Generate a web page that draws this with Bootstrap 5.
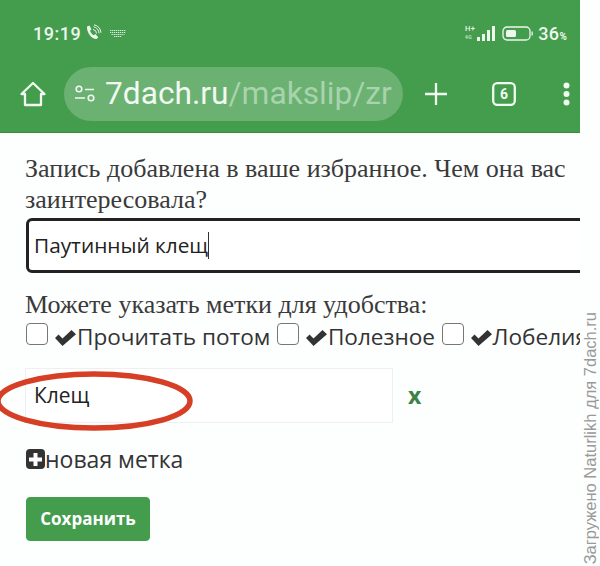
<!DOCTYPE html>
<html lang="ru">
<head>
  <meta charset="UTF-8">
  <meta name="viewport" content="width=device-width, initial-scale=1.0">
  <title>Метки</title>
  <link href="https://cdn.jsdelivr.net/npm/bootstrap@5.3.0/dist/css/bootstrap.min.css" rel="stylesheet">
  <style>
    html, body { height: 566px; overflow: hidden; }
    body { background: #fdfefe; font-family: "Open Sans", "Noto Sans", sans-serif; color: #333; }
    .shot { width: 600px; height: 566px; position: relative; overflow: hidden; }
    .phone { width: 580px; height: 566px; overflow: hidden; position: relative; }
    .top-bar { height: 133px; background: #439d4c; color: #eef6ee; border-bottom: 1px solid #3a8a44; }
    .status-row { height: 61px; padding: 5px 13px 0 33px; font-family: Roboto, sans-serif; font-weight: 500; font-size: 18px; letter-spacing: .5px; }
    .status-pct { font-size: 10px; font-weight: 700; letter-spacing: 0; }
    .url-row { height: 66px; padding-left: 20px; }
    .url-pill { width: 339px; height: 54px; margin-left: 18px; padding-left: 10px; border-radius: 27px; background: #6ab172; font-family: Roboto, sans-serif; font-size: 31.7px; white-space: nowrap; overflow: hidden; }
    .url-host { margin-left: 9px; color: #f2f9f2; }
    .url-path { color: #a9d3ad; }
    .tool-plus { margin-left: 22px; }
    .tool-tabs { margin-left: 45px; }
    .tool-menu { margin-left: 47px; }
    .form-area { padding: 20px 0 0 26px; }
    .serif-line { font-family: "Liberation Serif", serif; font-size: 26px; line-height: 31px; color: #3a3a3a; margin: 0 0 0 -1px; width: 548px; }
    .note-input { width: 600px; height: 55px; margin-top: 3px; padding: 0 5px; border: 3px solid #222; border-radius: 6px; font-size: 20.8px; color: #222; background: #fff; display: flex; align-items: center; }
    .caret-bar { width: 1px; height: 27px; background: #333; }
    .label-head { margin-top: 16px; }
    .tag-row { height: 33px; white-space: nowrap; font-size: 22.6px; line-height: 30px; color: #333; }
    .tag-box { width: 22px; height: 22px; border: 1.5px solid #777; border-radius: 4px; background: #fff; flex: none; margin-top: -6px; }
    .tag-check { margin-left: 7px; margin-right: 1px; margin-top: 2px; flex: none; }
    .tag-item { margin-right: 6.5px; }
    .tag-field-row { margin-top: 15px; }
    .tag-field { width: 368px; height: 55px; margin-left: -1px; padding-left: 8px; border: 1px solid #efefef; background: #fff; font-size: 21px; color: #222; display: flex; align-items: center; }
    .tag-remove { margin-left: 15px; color: #3d8346; font-weight: 700; font-size: 23px; }
    .new-tag { margin-top: 21px; font-size: 23px; line-height: 30px; color: #333; }
    .plus-box { width: 19px; height: 20px; border-radius: 4px; background: #333; flex: none; }
    .btn-keep { margin-top: 23px; width: 124px; height: 44px; padding: 0; background: #439d4c; border-color: #439d4c; color: #fff; font-weight: 700; font-size: 17px; border-radius: 4px; }
    .red-ring { position: absolute; left: -6px; top: 368px; }
    .wm-text { position: absolute; left: 581px; bottom: 2px; writing-mode: vertical-rl; transform: rotate(180deg); font-family: "Liberation Sans", sans-serif; font-size: 16.5px; line-height: 18px; color: #9a9a9a; white-space: nowrap; }
  </style>
</head>
<body>
  <div class="shot">
    <div class="phone">
      <div class="top-bar">
        <div class="status-row d-flex align-items-center">
          <span>19:19</span>
          <!-- phone with wifi-call arcs -->
          <svg class="ms-1" width="17" height="18" viewBox="0 0 17 18" fill="none">
            <path d="M2 2.500l2.500-1 2 4-1.500 1.200c.6 1.800 2 3.500 3.800 4.600l1.500-1.300 3 3.200-1.800 1.800C6.500 15 1.500 8.500 2 2.500z" fill="#eef6ee"/>
            <path d="M8 5.500a4 4 0 0 1 3.500 4M8.500 2.800a6.500 6.500 0 0 1 5.500 6.500M9 .8a8.500 8.500 0 0 1 7 8" stroke="#eef6ee" stroke-width="1"/>
          </svg>
          <!-- keyboard -->
          <svg class="ms-2" width="16" height="9" viewBox="0 0 16 9" fill="none" stroke="#dcecdd" stroke-width="1.200">
            <path d="M0 1.500h16M0 3.500h16M1.500 5.500h13M4 7.500h8" stroke-dasharray="1.300 .7"/>
          </svg>
          <div class="ms-auto d-flex align-items-center">
            <svg width="33" height="18" viewBox="0 0 33 18">
              <text x="0" y="7" font-size="7.500" font-family="Roboto, sans-serif" fill="#eef6ee">H+</text>
              <text x="0" y="15" font-size="5" font-family="Roboto, sans-serif" fill="#cfe6d1">4G</text>
              <rect x="12" y="13" width="3" height="4" fill="#eef6ee"/>
              <rect x="17" y="10" width="3" height="7" fill="#eef6ee"/>
              <rect x="22" y="6" width="3" height="11" fill="#eef6ee"/>
              <rect x="27" y="2" width="3" height="15" fill="#eef6ee"/>
            </svg>
            <svg class="ms-1" width="32" height="15" viewBox="0 0 32 15" fill="none">
              <rect x="1" y="1" width="27" height="13" rx="4" stroke="#eef6ee" stroke-width="1.300"/>
              <rect x="4" y="4" width="10" height="7" rx="1.500" fill="#eef6ee"/>
              <rect x="29.500" y="5.500" width="1.300" height="4" fill="#eef6ee"/>
            </svg>
            <span class="ms-1">36<span class="status-pct">%</span></span>
          </div>
        </div>
        <div class="url-row d-flex align-items-center">
          <!-- home -->
          <svg width="26" height="26" viewBox="0 0 26 26" fill="none" stroke="#f2f9f2" stroke-width="2.300" stroke-linejoin="round">
            <path d="M1.500 13L13 2l11.500 11h-3.500v11H5V13z"/>
          </svg>
          <div class="url-pill d-flex align-items-center">
            <svg width="22" height="18" viewBox="0 0 22 18" fill="none" stroke="#f2f9f2" stroke-width="1.600">
              <circle cx="5" cy="4" r="2.800"/>
              <path d="M11 4.500h9M1 13h10"/>
              <circle cx="17" cy="13" r="2.800"/>
            </svg>
            <span class="url-host">7dach.ru</span><span class="url-path">/makslip/zr</span>
          </div>
          <svg class="tool-plus" width="22" height="22" viewBox="0 0 22 22" stroke="#f2f9f2" stroke-width="2.300">
            <path d="M11 0v22M0 11h22"/>
          </svg>
          <svg class="tool-tabs" width="24" height="24" viewBox="0 0 24 24" fill="none">
            <rect x="1.200" y="1.200" width="21.600" height="21.600" rx="4" stroke="#f2f9f2" stroke-width="2.300"/>
            <text x="12" y="17" text-anchor="middle" font-size="14" font-weight="700" font-family="Roboto, sans-serif" fill="#f2f9f2">6</text>
          </svg>
          <svg class="tool-menu" width="7" height="24" viewBox="0 0 7 24" fill="#f2f9f2">
            <circle cx="3.500" cy="3.500" r="3"/>
            <circle cx="3.500" cy="12" r="3"/>
            <circle cx="3.500" cy="20.500" r="3"/>
          </svg>
        </div>
      </div>

      <form class="form-area">
        <p class="serif-line">Запись добавлена в ваше избранное. Чем она вас заинтересовала?</p>
        <div class="note-input">Паутинный клещ<span class="caret-bar"></span></div>

        <p class="serif-line label-head">Можете указать метки для удобства:</p>
        <div class="tag-row d-flex align-items-center">
          <span class="tag-box"></span>
          <svg class="tag-check" width="21" height="16" viewBox="0 0 21 16" fill="#333"><path d="M0 8l3.500-3.500 4 4L16.500 0 21 4.200 7.500 16z"/></svg>
          <span class="tag-item">Прочитать потом</span>
          <span class="tag-box"></span>
          <svg class="tag-check" width="21" height="16" viewBox="0 0 21 16" fill="#333"><path d="M0 8l3.500-3.500 4 4L16.500 0 21 4.200 7.500 16z"/></svg>
          <span class="tag-item">Полезное</span>
          <span class="tag-box"></span>
          <svg class="tag-check" width="21" height="16" viewBox="0 0 21 16" fill="#333"><path d="M0 8l3.500-3.500 4 4L16.500 0 21 4.200 7.500 16z"/></svg>
          <span class="tag-item">Лобелия</span>
        </div>

        <div class="tag-field-row d-flex align-items-center">
          <div class="tag-field">Клещ</div>
          <span class="tag-remove">x</span>
        </div>

        <div class="new-tag d-flex align-items-center">
          <span class="plus-box d-flex align-items-center justify-content-center">
            <svg width="15" height="15" viewBox="0 0 15 15" fill="#fff"><path d="M5.500 1h4v4.500H14v4H9.500V14h-4V9.500H1v-4h4.500z"/></svg>
          </span>
          <span>новая метка</span>
        </div>

        <button type="button" class="btn btn-keep d-block">Сохранить</button>
      </form>

      <svg class="red-ring" width="202" height="66" viewBox="0 0 202 66" fill="none">
        <ellipse cx="100" cy="33" rx="96" ry="27" stroke="#d63f25" stroke-width="5.500"/>
      </svg>
    </div>
    <div class="wm-text">Загружено Naturlikh для 7dach.ru</div>
  </div>
  <script src="https://cdn.jsdelivr.net/npm/bootstrap@5.3.0/dist/js/bootstrap.bundle.min.js"></script>
</body>
</html>
